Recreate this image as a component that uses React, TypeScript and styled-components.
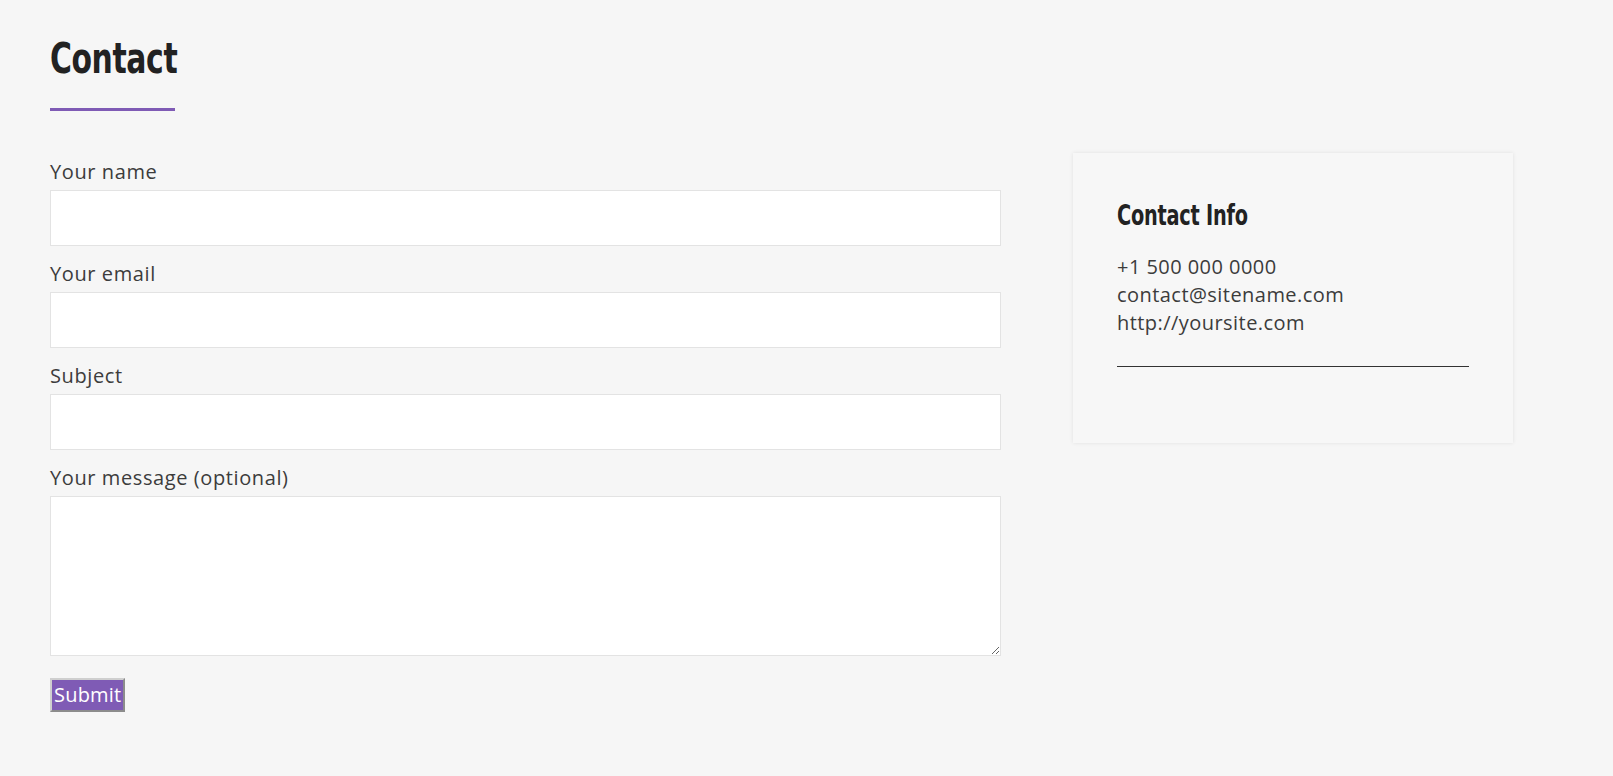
import React from "react";
import styled, { createGlobalStyle } from "styled-components";

const GlobalStyle = createGlobalStyle`
  html, body {
    margin: 0;
    padding: 0;
    background: #f6f6f6;
  }
  body {
    font-family: "Open Sans", "Noto Sans", sans-serif;
    color: #3c3c3c;
  }
  * { box-sizing: border-box; }
`;

const Page = styled.div`
  padding: 34px 100px 40px 50px;
  min-height: 776px;
`;

const Title = styled.h1`
  margin: 0;
  display: block;
  width: max-content;
  font-family: "DejaVu Sans Condensed", "Liberation Sans", sans-serif;
  font-weight: 700;
  font-size: 42px;
  line-height: 1.2;
  color: #222222;
  letter-spacing: -0.5px;
  transform: scaleX(0.79);
  transform-origin: left center;
`;

const TitleRule = styled.div`
  width: 125px;
  height: 3px;
  margin-top: 24px;
  background: #7f5bb5;
`;

const Columns = styled.div`
  display: grid;
  grid-template-columns: 951px 440px;
  column-gap: 72px;
  align-items: start;
  margin-top: 42px;
`;

const Form = styled.form`
  display: flex;
  flex-direction: column;
  padding-top: 4px;
`;

const Field = styled.div`
  display: flex;
  flex-direction: column;
  margin-bottom: 13px;
`;

const Label = styled.label`
  font-size: 20px;
  line-height: 30px;
  letter-spacing: 0.6px;
  color: #3c3c3c;
  margin-bottom: 3px;
`;

const TextInput = styled.input`
  display: block;
  width: 100%;
  height: 56px;
  background: #ffffff;
  border: 1px solid #e3e3e3;
  font-family: inherit;
  font-size: 18px;
  padding: 0 12px;
  outline: none;
`;

const TextArea = styled.textarea`
  display: block;
  width: 100%;
  height: 160px;
  background: #ffffff;
  border: 1px solid #e3e3e3;
  font-family: inherit;
  font-size: 18px;
  padding: 10px 12px;
  outline: none;
  resize: both;
`;

const SubmitButton = styled.button`
  align-self: flex-start;
  margin-top: 9px;
  padding: 0 2px;
  font-family: "Open Sans", "Noto Sans", sans-serif;
  font-size: 20px;
  line-height: 30px;
  letter-spacing: 0.2px;
  color: #ffffff;
  background: #7f5bb5;
  border-width: 2px;
  border-style: solid;
  border-color: #cfcfcf #8c8c8c #8c8c8c #cfcfcf;
  cursor: pointer;
`;

const Card = styled.aside`
  background: #f7f7f7;
  box-shadow: 0 0 4px rgba(0, 0, 0, 0.09);
  padding: 46px 44px 44px 44px;
  height: 290px;
`;

const CardTitle = styled.h3`
  margin: 0 0 21px 0;
  width: max-content;
  font-family: "DejaVu Sans Condensed", "Liberation Sans", sans-serif;
  font-weight: 700;
  font-size: 29px;
  line-height: 33px;
  color: #222222;
  letter-spacing: -0.3px;
  transform: scaleX(0.74);
  transform-origin: left center;
`;

const InfoLine = styled.div`
  font-size: 20px;
  line-height: 28px;
  letter-spacing: 0.45px;
  color: #3c3c3c;
`;

const CardRule = styled.hr`
  margin: 29px 0 0 0;
  border: 0;
  height: 1px;
  background: #333333;
`;

export default function App() {
  return (
    <>
      <GlobalStyle />
      <Page>
        <Title>Contact</Title>
        <TitleRule />
        <Columns>
          <Form onSubmit={(e) => e.preventDefault()}>
            <Field>
              <Label htmlFor="name">Your name</Label>
              <TextInput id="name" type="text" />
            </Field>
            <Field>
              <Label htmlFor="email">Your email</Label>
              <TextInput id="email" type="email" />
            </Field>
            <Field>
              <Label htmlFor="subject">Subject</Label>
              <TextInput id="subject" type="text" />
            </Field>
            <Field>
              <Label htmlFor="message">Your message (optional)</Label>
              <TextArea id="message" />
            </Field>
            <SubmitButton type="submit">Submit</SubmitButton>
          </Form>
          <Card>
            <CardTitle>Contact Info</CardTitle>
            <InfoLine>+1 500 000 0000</InfoLine>
            <InfoLine>contact@sitename.com</InfoLine>
            <InfoLine>http://yoursite.com</InfoLine>
            <CardRule />
          </Card>
        </Columns>
      </Page>
    </>
  );
}
